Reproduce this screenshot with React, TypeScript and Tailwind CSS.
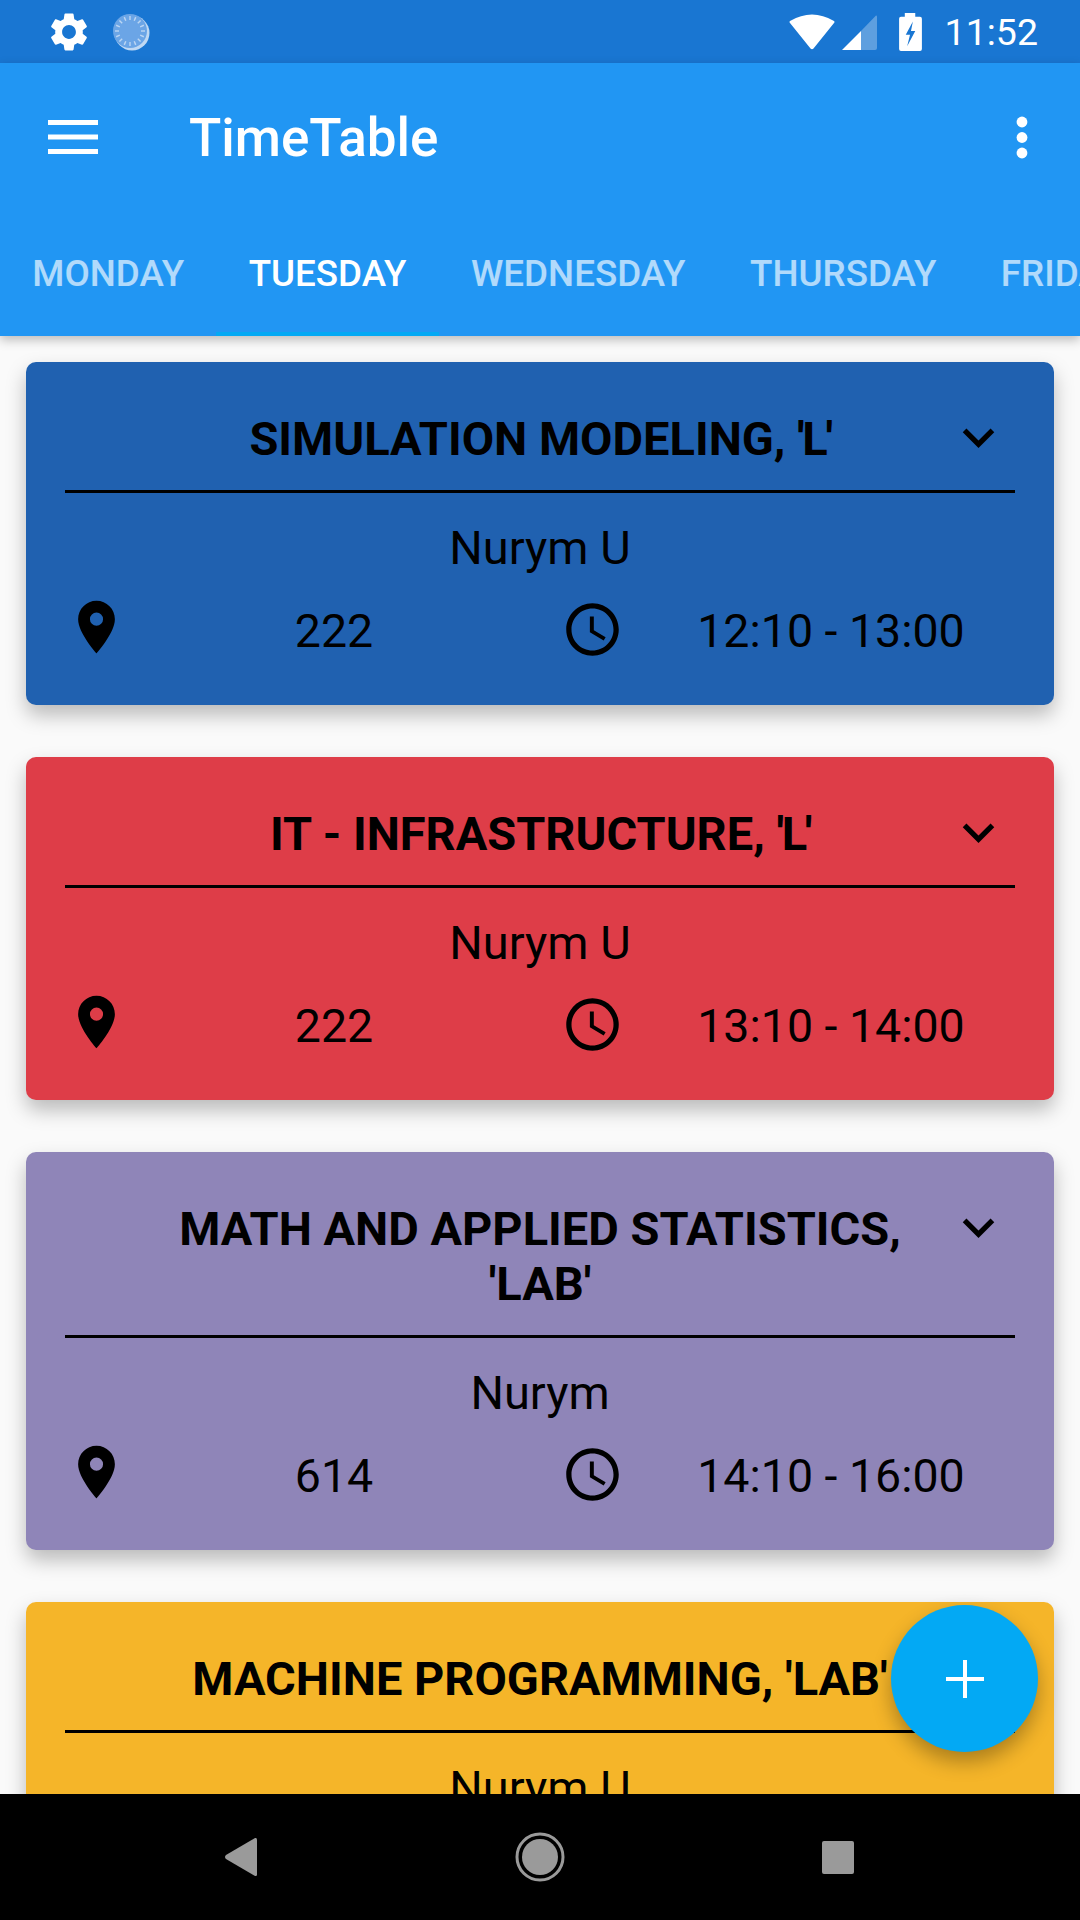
import React from "react";
import { MdSettings, MdLocationOn, MdAccessTime, MdKeyboardArrowDown } from "react-icons/md";

const tabs = ["MONDAY", "TUESDAY", "WEDNESDAY", "THURSDAY", "FRIDAY"];

type Lesson = { title: string; tail: string; tailClass: string; bg: string; who: string; room: string; time: string };
const lessons: Lesson[] = [
  { title: "SIMULATION MODELING, ", tail: "'L'", tailClass: "tracking-[-0.05em]", bg: "bg-[#2061b0]", who: "Nurym U", room: "222", time: "12:10 - 13:00" },
  { title: "IT - INFRASTRUCTURE, ", tail: "'L'", tailClass: "tracking-[-0.05em]", bg: "bg-[#de3d48]", who: "Nurym U", room: "222", time: "13:10 - 14:00" },
  { title: "MATH AND APPLIED STATISTICS, ", tail: "'LAB'", tailClass: "", bg: "bg-[#8f85b8]", who: "Nurym", room: "614", time: "14:10 - 16:00" },
  { title: "MACHINE PROGRAMMING, ", tail: "'LAB'", tailClass: "", bg: "bg-[#f5b529]", who: "Nurym U", room: "222", time: "16:10 - 18:00" },
];

function Card({ l }: { l: Lesson }) {
  return (
    <div className={`relative mx-[26px] shrink-0 rounded-[10px] ${l.bg} pt-[49px] pb-[43px] text-black shadow-[0_10px_20px_rgba(0,0,0,0.26)]`}>
      <div className="px-[120px] text-center text-[47px] leading-[55px] font-bold">
        {l.title}
        <span className={l.tailClass}>{l.tail}</span>
      </div>
      <MdKeyboardArrowDown className="absolute top-[44px] left-[921px] text-[63px]" />
      <div className="mx-[39px] mt-[24px] h-[3px] bg-black" />
      <div className="mt-[31px] text-center text-[47px] leading-[48px]">{l.who}</div>
      <div className="mx-[39px] mt-[28px] grid h-[62px] grid-cols-[63px_412px_105px_372px] grid-rows-[62px] items-center text-[46.5px] leading-[48px]">
        <div className="mb-[8px] flex justify-center">
          <MdLocationOn className="text-[68px]" />
        </div>
        <div className="text-center">{l.room}</div>
        <div className="mb-[4px] flex justify-center">
          <MdAccessTime className="text-[63px]" />
        </div>
        <div className="text-center">{l.time}</div>
      </div>
    </div>
  );
}

export default function App() {
  return (
    <div className="relative flex h-[1920px] w-[1080px] flex-col overflow-hidden bg-[#fafafa] font-['Roboto',sans-serif]">
      {/* status bar */}
      <div className="flex h-[63px] shrink-0 items-center bg-[#1976d2] pr-[42px] pl-[46px] text-white">
        <MdSettings className="text-[46px]" />
        <svg width="38" height="38" viewBox="0 0 38 38" className="ml-[20px]">
          <circle cx="20" cy="20" r="17.5" fill="#e8f1fb" opacity="0.8" />
          <circle cx="18" cy="18" r="17" fill="#6ba5e6" />
          <g stroke="#bcd6f3" strokeWidth="1.4">
            {Array.from({ length: 16 }).map((_, i) => (
              <line key={i} x1="18" y1="3" x2="18" y2="7" transform={`rotate(${i * 22.5} 18 18)`} />
            ))}
          </g>
        </svg>
        <div className="flex-1" />
        <svg width="46" height="37" viewBox="0 0 46 37">
          <path d="M1 8 Q23 -5 45 8 Q46 9 45 10 L24.5 35.5 Q23 37 21.5 35.5 L1 10 Q0 9 1 8 Z" fill="#fff" />
        </svg>
        <svg width="36" height="35" viewBox="0 0 36 35" className="mt-[2px] ml-[6px]">
          <path d="M35 0.5 Q36 0 36 2 V33 Q36 35 34 35 H20 V16 Z" fill="#fff" opacity="0.3" />
          <path d="M1 35 L20 16 L20 35 Z" fill="#fff" />
        </svg>
        <svg width="23" height="38" viewBox="0 0 24 40" className="ml-[22px]">
          <path d="M6 0 H17 V4 H22 Q24 4 24 6 V38 Q24 40 22 40 H2 Q0 40 0 38 V6 Q0 4 2 4 H6 Z" fill="#fff" />
          <path d="M14.5 9 L7 23 H11.5 L8.5 35 L17 19 H12.5 Z" fill="#1976d2" />
        </svg>
        <span className="mt-[2px] ml-[23px] text-[37.5px] leading-none">11:52</span>
      </div>

      {/* app bar */}
      <div className="relative z-10 h-[273px] shrink-0 bg-[#2196f3] shadow-[0_4px_10px_rgba(0,0,0,0.25)]">
        <div className="flex h-[148px] items-center pr-[52px] pl-[48px]">
          <svg width="50" height="34" viewBox="0 0 50 34">
            <path d="M0 0 H50 V5 H0 Z M0 14.5 H50 V19.5 H0 Z M0 29 H50 V34 H0 Z" fill="#fff" />
          </svg>
          <div className="mt-[2px] ml-[91px] flex-1 text-[53px] leading-none font-medium text-white">TimeTable</div>
          <svg width="12" height="43" viewBox="0 0 12 43">
            <circle cx="6" cy="6" r="5.4" fill="#fff" />
            <circle cx="6" cy="21.5" r="5.4" fill="#fff" />
            <circle cx="6" cy="37" r="5.4" fill="#fff" />
          </svg>
        </div>
        <div className="flex h-[125px] items-stretch overflow-hidden whitespace-nowrap">
          {tabs.map((t, i) => (
            <div
              key={t}
              className={`relative flex shrink-0 items-center px-[32.25px] text-[36.75px] font-medium ${
                i === 1 ? "text-white" : "text-white/65"
              }`}
            >
              {t}
              {i === 1 && <div className="absolute right-0 bottom-0 left-0 h-[4px] bg-[#03a9f4]" />}
            </div>
          ))}
        </div>
      </div>

      {/* list */}
      <div className="flex min-h-0 flex-1 flex-col gap-[52px] overflow-hidden pt-[26px]">
        {lessons.map((l) => (
          <Card key={l.title} l={l} />
        ))}
      </div>

      {/* nav bar */}
      <div className="relative z-10 flex h-[126px] shrink-0 items-center justify-center bg-black">
        <div className="flex w-[299px] justify-center">
          <svg width="32" height="40" viewBox="0 0 33 40">
            <path d="M31 0.5 Q33 0 33 2 V38 Q33 40 31 39.5 L1 22 Q-1 20 1 18 Z" fill="#9a9a9a" />
          </svg>
        </div>
        <div className="flex w-[299px] justify-center">
          <svg width="50" height="50" viewBox="0 0 50 50">
            <circle cx="25" cy="25" r="23" fill="none" stroke="#9a9a9a" strokeWidth="3" />
            <circle cx="25" cy="25" r="18" fill="#9a9a9a" />
          </svg>
        </div>
        <div className="flex w-[299px] justify-center pr-[2px]">
          <div className="h-[33px] w-[32px] rounded-[2px] bg-[#9a9a9a]" />
        </div>
      </div>

      {/* fab */}
      <div className="absolute top-[1605px] left-[891px] z-20 flex h-[147px] w-[147px] items-center justify-center rounded-full bg-[#03a9f4] shadow-[0_10px_20px_rgba(0,0,0,0.3)]">
        <svg width="38" height="38" viewBox="0 0 38 38">
          <path d="M17 0 H21 V17 H38 V21 H21 V38 H17 V21 H0 V17 H17 Z" fill="#fff" />
        </svg>
      </div>
    </div>
  );
}
